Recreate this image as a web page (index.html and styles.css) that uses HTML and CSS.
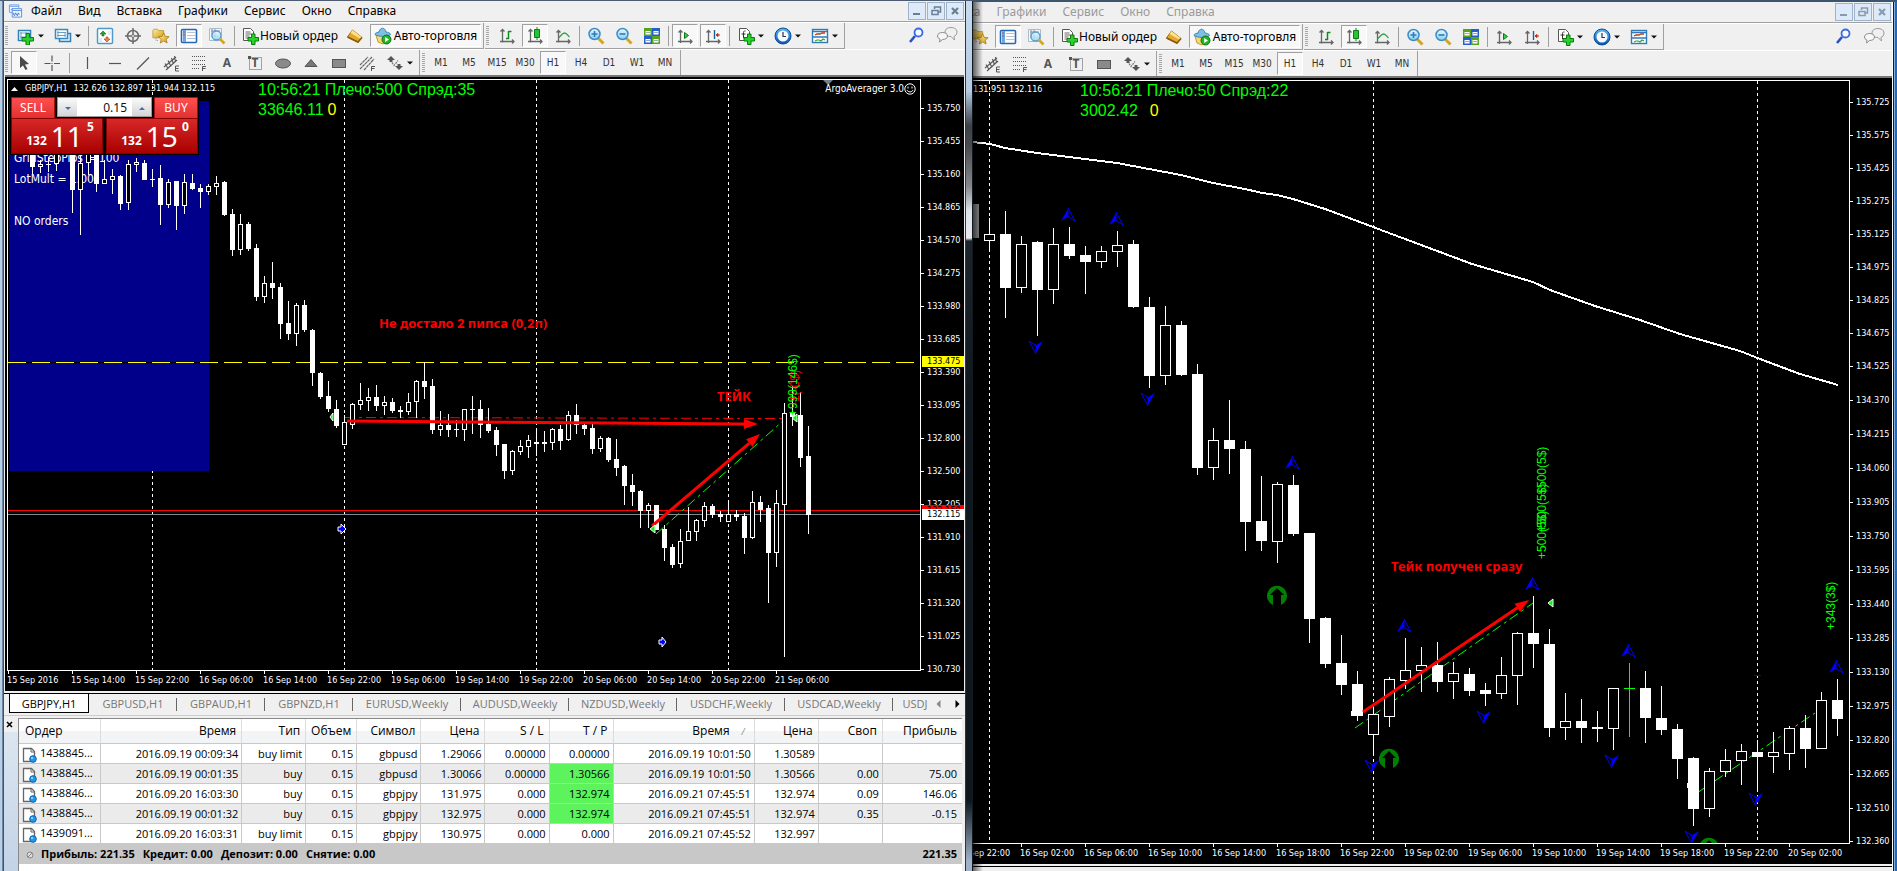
FILE: index.html
```html
<!DOCTYPE html>
<html lang="ru">
<head>
<meta charset="utf-8">
<title>GBPJPY,H1</title>
<link rel="stylesheet" href="styles.css">
</head>
<body>
<svg class="sprite" aria-hidden="true">
  <linearGradient id="g-gold" x1="0" y1="0" x2="1" y2="1"><stop offset="0" stop-color="#fff0a0"/><stop offset="1" stop-color="#d49a10"/></linearGradient>
  <linearGradient id="g-lens" x1="0" y1="0" x2="0" y2="1"><stop offset="0" stop-color="#e8f8ff"/><stop offset="1" stop-color="#86cdf2"/></linearGradient>
  <linearGradient id="g-blue" x1="0" y1="0" x2="0" y2="1"><stop offset="0" stop-color="#5cb8f0"/><stop offset="1" stop-color="#0a50b0"/></linearGradient>
  <symbol id="i-app" viewBox="0 0 16 16"><path d="M1.500 1.500h10v8h-10z" fill="#eef5ff" stroke="#6d9fe8"/><path d="M1.500 3h10" stroke="#6d9fe8"/><path d="M3 7l2-2 2 2 2-2" fill="none" stroke="#4f88dd"/><path d="M4.500 5.500h10v9h-10z" fill="#eef5ff" stroke="#5b8fe0"/><path d="M4.500 7.500h10" stroke="#5b8fe0"/><path d="M6 10v2l1 1 1-3 2 3 1-3 1 2" fill="none" stroke="#3d77d5"/></symbol>
  <symbol id="i-newchart" viewBox="0 0 18 18"><path d="M1.500 3.500h12v10h-12z" fill="#fff" stroke="#2f7fb8" stroke-width="1.500"/><path d="M4 5v7M3 10h9M3 6h9M9 5v3" stroke="#6aa0c4" fill="none"/><path d="M9 6.500h3.500v4h4v3.500h-4v4H9v-4H5v-3.500h4z" fill="#2bd12b" stroke="#0a7a12"/></symbol>
  <symbol id="i-profiles" viewBox="0 0 18 18"><path d="M5.500 6.500h11v8h-11z" fill="#dff0fb" stroke="#2f7fb8" stroke-width="1.500"/><path d="M1.500 2.500h12v9h-12z" fill="#fff" stroke="#3a88c0" stroke-width="1.500"/><path d="M4 4v6M3 5.500h9M3 8.500h9M11 6v4" stroke="#6aa0c4" fill="none"/></symbol>
  <symbol id="i-market" viewBox="0 0 18 18"><rect x="1.500" y="1.500" width="15" height="15" rx="1" fill="#fff" stroke="#4d9bc9" stroke-width="1.500"/><path d="M4 7l3-3 3 3H8v2H6V7z" fill="#28a428" stroke="#0a6d12" stroke-width=".6"/><path d="M8 12l3 3 3-3h-2v-2h-2v2z" fill="#f08040" stroke="#c03808" stroke-width=".6"/><path d="M3 12h3M3 14h3M12 5h3M12 7h3" stroke="#c6d8e4"/></symbol>
  <symbol id="i-target" viewBox="0 0 18 18"><g fill="none" stroke="#6a6a6a" stroke-width="1.500"><circle cx="9" cy="9" r="5.500"/><circle cx="9" cy="9" r="1.500" stroke-width="1"/><path d="M9 1v6M9 11v6M1 9h6M11 9h6"/></g></symbol>
  <symbol id="i-folder" viewBox="0 0 20 18"><path d="M1 3l1-1.500h4L7.500 3H13v8H1z" fill="url(#g-gold)" stroke="#b58a20" stroke-width=".8"/><path d="M4.500 11v3h3" fill="none" stroke="#888" stroke-dasharray="1 1"/><path d="M13 5.500l1.700 3.900 4.300.4-3.200 2.800 1 4.200-3.800-2.200-3.800 2.200 1-4.200L7 9.800l4.300-.4z" fill="url(#g-gold)" stroke="#a87a18" stroke-width=".9"/></symbol>
  <symbol id="i-nav" viewBox="0 0 18 18"><rect x="1.500" y="2.500" width="15" height="13" rx="1" fill="#fff" stroke="#2668b8" stroke-width="1.600"/><path d="M4.500 3v12" stroke="#6fa6dc" stroke-width="3"/><path d="M7 5.500h9M7 8.500h9M7 11.500h9" stroke="#b4c4d6"/><path d="M3.500 5h1M3.500 8h1" stroke="#d01010"/></symbol>
  <symbol id="i-tester" viewBox="0 0 18 18"><path d="M1.500 1.500h12v12h-12z" fill="#f4f8fb" stroke="#a6bccb"/><path d="M4 2v8M7 2v8M3 4h9" stroke="#88a"/><circle cx="8.500" cy="8.500" r="4.500" fill="url(#g-lens)" fill-opacity=".8" stroke="#5d9cc8" stroke-width="1.300"/><path d="M12 12l4.500 4.500" stroke="#d6a520" stroke-width="2.600"/></symbol>
  <symbol id="i-order" viewBox="0 0 18 18"><path d="M2.500 1.500h7l3 3v9h-10z" fill="#fff" stroke="#555"/><path d="M4.500 5h5M4.500 7h6M4.500 9h4M4.500 11h3" stroke="#666"/><path d="M10.500 7h3.500v3.500h3.500V14H14v3.500h-3.500V14H7v-3.500h3.500z" fill="#2bd12b" stroke="#0a7a12"/></symbol>
  <symbol id="i-gold" viewBox="0 0 18 18"><path d="M6.500 3L16 10.500l-4 5L1.500 10z" fill="#e3a92c" stroke="#9b6a10"/><path d="M6.500 3L16 10.500l-2 1L4.500 6z" fill="#ffe28a"/><path d="M1.500 10l10.500 5 4-4.500" fill="none" stroke="#8a5a0a" stroke-width="1.500"/></symbol>
  <symbol id="i-auto" viewBox="0 0 18 18"><path d="M2 8h13l-1 6-5 3-5-2z" fill="#f5d878" stroke="#c89a28"/><path d="M1 7.500c0-2 3-2 4-2.500 1-5 6-5 7 0 1.500.3 4.500.8 4.500 2.500-3 2.500-12 2.500-15.500 0z" fill="#7cc0e8" stroke="#3b87b5"/><circle cx="12.500" cy="12.500" r="4.500" fill="#22b422" stroke="#0b7514"/><path d="M11.200 10v5l3.800-2.500z" fill="#fff"/></symbol>
  <symbol id="i-bars" viewBox="0 0 18 18"><path d="M4.500 2v13.500M2 14.500h14M2.500 4.500l2-2 2 2M14 12.500l2 2-2 2" fill="none" stroke="#666" stroke-width="1.300"/><path d="M8 11.500h3M10.500 12V4M10.500 4.500h3" fill="none" stroke="#128a22" stroke-width="1.500"/></symbol>
  <symbol id="i-candle" viewBox="0 0 18 18"><path d="M4.500 2v13.500M2 14.500h14M2.500 4.500l2-2 2 2M14 12.500l2 2-2 2" fill="none" stroke="#666" stroke-width="1.300"/><path d="M11 0v13" stroke="#128a22"/><path d="M8.500 2.500h5v8h-5z" fill="#25c535" stroke="#0c7a18"/></symbol>
  <symbol id="i-line" viewBox="0 0 18 18"><path d="M4.500 3v12.500M2 14.500h14M2.500 5.500l2-2 2 2M14 12.500l2 2-2 2" fill="none" stroke="#666" stroke-width="1.300"/><path d="M4.500 11c3-3 4-5 6-5s3 2 5 4" fill="none" stroke="#35a045" stroke-width="1.300"/></symbol>
  <symbol id="i-zin" viewBox="0 0 18 18"><path d="M11 11l5.500 5.500" stroke="#d6a520" stroke-width="3"/><circle cx="7.500" cy="7" r="5.500" fill="url(#g-lens)" stroke="#3c8cc8" stroke-width="1.500"/><path d="M4.500 7h6M7.500 4v6" stroke="#2f7ab8" stroke-width="1.600"/></symbol>
  <symbol id="i-zout" viewBox="0 0 18 18"><path d="M11 11l5.500 5.500" stroke="#d6a520" stroke-width="3"/><circle cx="7.500" cy="7" r="5.500" fill="url(#g-lens)" stroke="#3c8cc8" stroke-width="1.500"/><path d="M4.500 7h6" stroke="#2f7ab8" stroke-width="1.600"/></symbol>
  <symbol id="i-tile" viewBox="0 0 18 18"><path d="M1 1h8v8H1zM9 9h8v8H9z" fill="#55a51c"/><path d="M9 1h8v8H9zM1 9h8v8H1z" fill="#2460cc"/><path d="M2.500 4h5v3.500h-5zM10.500 4h5v3.500h-5zM2.500 12h5v3.500h-5zM10.500 12h5v3.500h-5z" fill="#fff"/><path d="M3 5.500h4M11 5.500h4M3 13.500h4M11 13.500h4" stroke="#9ab"/></symbol>
  <symbol id="i-scroll" viewBox="0 0 18 18"><path d="M4.500 3v13M2 14.500h14M2.500 5.500l2-2 2 2M14 12.500l2 2-2 2" fill="none" stroke="#666" stroke-width="1.300"/><path d="M8.500 5.500v6l4-3z" fill="#35d045" stroke="#0c7a18"/></symbol>
  <symbol id="i-shift" viewBox="0 0 18 18"><path d="M4.500 3v13M2 14.500h14M2.500 5.500l2-2 2 2M14 12.500l2 2-2 2" fill="none" stroke="#666" stroke-width="1.300"/><path d="M10.500 3v9" stroke="#1560a0" stroke-width="1.400"/><path d="M16 8h-3M14 6.500v3L12 8z" fill="#c03010" stroke="#c03010"/></symbol>
  <symbol id="i-indic" viewBox="0 0 18 18"><path d="M2.500 1.500h7l3 3v9h-10z" fill="#fff" stroke="#555"/><path d="M8.500 4c-2-.5-2 1-2 3v4M4.500 7h4" fill="none" stroke="#333"/><path d="M10.500 7h3.500v3.500h3.500V14H14v3.500h-3.500V14H7v-3.500h3.500z" fill="#2bd12b" stroke="#0a7a12"/></symbol>
  <symbol id="i-clock" viewBox="0 0 18 18"><circle cx="9" cy="9" r="8" fill="url(#g-blue)" stroke="#0a4a98"/><circle cx="9" cy="9" r="5.500" fill="#f4faff"/><path d="M9 5v4.500h3" fill="none" stroke="#334" stroke-width="1.200"/></symbol>
  <symbol id="i-templ" viewBox="0 0 18 18"><rect x="1.500" y="2.500" width="15" height="13" fill="#fff" stroke="#2f7ab8" stroke-width="1.400"/><path d="M2 4.500h14M2 10h14" stroke="#2f7ab8" stroke-width="1.500"/><path d="M4 8l2-1h3l2-1 3 0" fill="none" stroke="#c03818" stroke-width="1.300"/><path d="M4 14l2-1h2l2 1 2-2 2 1" fill="none" stroke="#30a040" stroke-width="1.200"/></symbol>
  <symbol id="i-search" viewBox="0 0 18 18"><path d="M7 10l-5 6" stroke="#2c50c0" stroke-width="2.600"/><circle cx="10.500" cy="6.500" r="4" fill="#f4f8ff" stroke="#3a6ae0" stroke-width="1.800"/></symbol>
  <symbol id="i-chat" viewBox="0 0 22 18"><path d="M9 6c0-3 3-4.500 6-4.500s6 1.500 6 4.500-2 4-3 4.300L18.500 14 15 10.500C11 10.500 9 9 9 6z" fill="#f0f0f0" stroke="#999"/><path d="M1.500 10c0-2.500 2.500-3.500 5-3.500s5 1 5 3.500-2.500 3.500-5 3.500L3.500 16l.5-3c-1.500-.5-2.500-1.500-2.500-3z" fill="#f6f6f6" stroke="#8c8c8c"/></symbol>
  <symbol id="i-cursor" viewBox="0 0 18 18"><path d="M5 2v12l3-2.500 2.500 4.500 2-1L10 10.500l4-.5z" fill="#4a4a4a"/></symbol>
  <symbol id="i-cross" viewBox="0 0 18 18"><path d="M9 1.500v6M9 11v6M1.500 9.500h6M11 9.500h6" stroke="#555" stroke-width="1.200"/><path d="M8.500 9h1v1h-1z" fill="#555"/></symbol>
  <symbol id="i-vline" viewBox="0 0 18 18"><path d="M9.500 3v12" stroke="#555" stroke-width="1.200"/></symbol>
  <symbol id="i-hline" viewBox="0 0 18 18"><path d="M3 9.500h12" stroke="#555" stroke-width="1.200"/></symbol>
  <symbol id="i-trend" viewBox="0 0 18 18"><path d="M3 15.500L15 3.500" stroke="#555" stroke-width="1.200"/></symbol>
  <symbol id="i-equi" viewBox="0 0 18 18"><path d="M2 13L14 3M4 16L15 6M3 9.500l3 5M6 6.500l3 6M9.500 4l2 6M12.500 2l1 6" stroke="#555" stroke-width="1.100" fill="none"/><path d="M17 12h-3.500v5H17M13.500 14.500H16.500" stroke="#555" fill="none"/></symbol>
  <symbol id="i-fibo" viewBox="0 0 18 18"><path d="M2 2.500h14M2 6.500h14M2 10.500h14M2 14.500h8" stroke="#555" stroke-dasharray="1 1"/><path d="M12.500 17v-4.500H16M12.500 14.500H15.500" stroke="#555" fill="none"/></symbol>
  <symbol id="i-frame" viewBox="0 0 18 18"><path d="M3.500 3.500h12v12h-12z" fill="none" stroke="#555" stroke-dasharray="1 1"/><path d="M2 2h3v3H2z" fill="#555"/></symbol>
  <symbol id="i-ell" viewBox="0 0 18 18"><ellipse cx="9" cy="9.500" rx="7.500" ry="4.500" fill="#8a8a8a" stroke="#555"/></symbol>
  <symbol id="i-tri" viewBox="0 0 18 18"><path d="M9 5.500l6 7H3z" fill="#777" stroke="#555"/></symbol>
  <symbol id="i-rect" viewBox="0 0 18 18"><rect x="2.500" y="5.500" width="13" height="8" fill="#8a8a8a" stroke="#555"/></symbol>
  <symbol id="i-fan" viewBox="0 0 18 18"><path d="M2 11L10 3M2 15L14 3M6 16L16 5" stroke="#666" stroke-width="1.200" stroke-dasharray="3 .5"/><path d="M13.500 17v-4.500H17M13.500 14.500H16.500" stroke="#555" fill="none"/></symbol>
  <symbol id="i-arrows" viewBox="0 0 18 18"><path d="M5 2l4 4H6.500v2h-3V6H1zM13 16l-4-4h2.500v-2h3v2H17z" fill="#555"/><path d="M6 8.500l2 3 4-5" fill="none" stroke="#777" stroke-width="1.300" stroke-dasharray="2 1"/></symbol>
  <symbol id="i-doc" viewBox="0 0 15 16"><path d="M1.500 1.500h8l3 3v10h-11z" fill="#fff" stroke="#666" stroke-width="1.300"/><path d="M9 1.500V5h3.500" fill="none" stroke="#666"/><circle cx="11" cy="12" r="3.300" fill="#1f9be8" stroke="#0d62b0"/><circle cx="10" cy="11" r="1" fill="#a8e0ff"/></symbol>
  <symbol id="i-caret" viewBox="0 0 6 4"><path d="M0 .5h6L3 3.500z" fill="#111"/></symbol>
</svg>

<main class="desktop">
  <section class="terminal terminal-a">
    <div class="rim rim-left"></div>
    <div class="body">
      <nav class="menu">
        <svg class="app"><use href="#i-app"/></svg>
        <button>Файл</button><button>Вид</button><button>Вставка</button><button>Графики</button><button>Сервис</button><button>Окно</button><button>Справка</button>
        <span class="spacer"></span>
        <button class="box" aria-label="Свернуть"><svg viewBox="0 0 16 16"><path d="M4 11h7" stroke="#6a7f95" stroke-width="2"/></svg></button>
        <button class="box" aria-label="Восстановить"><svg viewBox="0 0 16 16"><path d="M6.500 6V4h6v5h-2M4 7.500h6v4H4z" fill="none" stroke="#6a7f95" stroke-width="1.500"/></svg></button>
        <button class="box" aria-label="Закрыть"><svg viewBox="0 0 16 16"><path d="M5 5l6 6M11 5l-6 6" stroke="#6a7f95" stroke-width="2.200"/></svg></button>
      </nav>
      <div class="bar">
        <div class="group">
          <i class="grip"></i>
          <button class="tb drop" aria-label="Новый график"><svg><use href="#i-newchart"/></svg><svg class="caret"><use href="#i-caret"/></svg></button>
          <button class="tb drop" aria-label="Профили"><svg><use href="#i-profiles"/></svg><svg class="caret"><use href="#i-caret"/></svg></button>
          <i class="sep"></i>
          <button class="tb" aria-label="Обзор рынка"><svg><use href="#i-market"/></svg></button>
          <button class="tb" aria-label="Окно данных"><svg><use href="#i-target"/></svg></button>
          <button class="tb" aria-label="Навигатор"><svg><use href="#i-folder"/></svg></button>
          <button class="tb on" aria-label="Терминал"><svg><use href="#i-nav"/></svg></button>
          <button class="tb" aria-label="Тестер"><svg><use href="#i-tester"/></svg></button>
          <i class="sep wide"></i>
          <button class="tb order"><svg><use href="#i-order"/></svg>Новый ордер</button>
          <button class="tb" aria-label="MetaEditor"><svg><use href="#i-gold"/></svg></button>
          <button class="tb on auto"><svg><use href="#i-auto"/></svg>Авто-торговля</button>
        </div>
        <div class="group">
          <i class="grip"></i>
          <button class="tb" aria-label="Бары"><svg><use href="#i-bars"/></svg></button>
          <button class="tb on" aria-label="Свечи"><svg><use href="#i-candle"/></svg></button>
          <button class="tb" aria-label="Линия"><svg><use href="#i-line"/></svg></button>
          <i class="sep"></i>
          <button class="tb" aria-label="Увеличить"><svg><use href="#i-zin"/></svg></button>
          <button class="tb" aria-label="Уменьшить"><svg><use href="#i-zout"/></svg></button>
          <button class="tb" aria-label="Упорядочить"><svg><use href="#i-tile"/></svg></button>
          <i class="sep"></i>
          <button class="tb on" aria-label="Автопрокрутка"><svg><use href="#i-scroll"/></svg></button>
          <button class="tb on" aria-label="Сдвиг графика"><svg><use href="#i-shift"/></svg></button>
          <i class="sep"></i>
          <button class="tb drop" aria-label="Индикаторы"><svg><use href="#i-indic"/></svg><svg class="caret"><use href="#i-caret"/></svg></button>
          <button class="tb drop" aria-label="Периоды"><svg><use href="#i-clock"/></svg><svg class="caret"><use href="#i-caret"/></svg></button>
          <button class="tb drop" aria-label="Шаблоны"><svg><use href="#i-templ"/></svg><svg class="caret"><use href="#i-caret"/></svg></button>
        </div>
        <span class="spacer"></span>
        <button class="tb" aria-label="Поиск"><svg><use href="#i-search"/></svg></button>
        <button class="tb chat" aria-label="Чат"><svg><use href="#i-chat"/></svg></button>
      </div>
      <div class="bar low">
        <div class="group">
          <i class="grip"></i>
          <button class="tb on" aria-label="Курсор"><svg><use href="#i-cursor"/></svg></button>
          <button class="tb" aria-label="Перекрестие"><svg><use href="#i-cross"/></svg></button>
          <i class="sep wide"></i>
          <button class="tb" aria-label="Вертикальная линия"><svg><use href="#i-vline"/></svg></button>
          <button class="tb" aria-label="Горизонтальная линия"><svg><use href="#i-hline"/></svg></button>
          <button class="tb" aria-label="Трендовая линия"><svg><use href="#i-trend"/></svg></button>
          <button class="tb" aria-label="Канал"><svg><use href="#i-equi"/></svg></button>
          <button class="tb" aria-label="Фибоначчи"><svg><use href="#i-fibo"/></svg></button>
          <button class="tb letter">A</button>
          <button class="tb letter framed"><svg><use href="#i-frame"/></svg><span>T</span></button>
          <button class="tb" aria-label="Эллипс"><svg><use href="#i-ell"/></svg></button>
          <button class="tb" aria-label="Треугольник"><svg><use href="#i-tri"/></svg></button>
          <button class="tb" aria-label="Прямоугольник"><svg><use href="#i-rect"/></svg></button>
          <button class="tb" aria-label="Веер"><svg><use href="#i-fan"/></svg></button>
          <button class="tb drop" aria-label="Стрелки"><svg><use href="#i-arrows"/></svg><svg class="caret"><use href="#i-caret"/></svg></button>
        </div>
        <div class="group frames">
          <i class="grip"></i>
          <button class="tb">M1</button><button class="tb">M5</button><button class="tb">M15</button><button class="tb">M30</button><button class="tb on">H1</button><button class="tb">H4</button><button class="tb">D1</button><button class="tb">W1</button><button class="tb">MN</button>
        </div>
      </div>

      <div class="chart">
        <div class="plot">
          <svg id="plot-a" class="canvas"></svg>
          <div class="caption"><svg viewBox="0 0 8 5"><path d="M0 5h7L3.500 1z" fill="#fff"/></svg><span>GBPJPY,H1</span><span>132.626 132.897 131.944 132.115</span></div>
          <div class="expert">ArgoAverager 3.0<svg viewBox="0 0 12 12"><circle cx="6" cy="6" r="5.200" fill="none" stroke="#fff"/><path d="M4 3.500v2M8 3.500v2" stroke="#fff"/><path d="M3 7c1 2.500 5 2.500 6 0" fill="none" stroke="#fff"/></svg></div>
          <div class="info"><p>10:56:21 Плечо:500 Спрэд:35</p><p>33646.11<b>0</b></p></div>
          <form class="trade">
            <button type="button" class="side sell">SELL</button>
            <div class="lots"><button type="button" aria-label="Меньше"><svg viewBox="0 0 6 4"><path d="M0 0h6L3 3z" fill="#4a6ab0"/></svg></button><input aria-label="Лот" value="0.15"><button type="button" aria-label="Больше"><svg viewBox="0 0 6 4"><path d="M0 3h6L3 0z" fill="#4a6ab0"/></svg></button></div>
            <button type="button" class="side buy">BUY</button>
            <div class="quote"><small>132</small><b>11</b><sup>5</sup></div>
            <div class="quote"><small>132</small><b>15</b><sup>0</sup></div>
          </form>
        </div>
        <div class="prices">
          <span>135.750</span><span>135.455</span><span>135.160</span><span>134.865</span><span>134.570</span><span>134.275</span><span>133.980</span><span>133.685</span><span>133.390</span><span>133.095</span><span>132.800</span><span>132.500</span><span>132.205</span><span>131.910</span><span>131.615</span><span>131.320</span><span>131.025</span><span>130.730</span>
          <mark class="level">133.475</mark><mark class="ask">132.150</mark><mark class="bid">132.115</mark>
        </div>
        <div class="times">
          <span>15 Sep 2016</span><span>15 Sep 14:00</span><span>15 Sep 22:00</span><span>16 Sep 06:00</span><span>16 Sep 14:00</span><span>16 Sep 22:00</span><span>19 Sep 06:00</span><span>19 Sep 14:00</span><span>19 Sep 22:00</span><span>20 Sep 06:00</span><span>20 Sep 14:00</span><span>20 Sep 22:00</span><span>21 Sep 06:00</span>
        </div>
      </div>

      <div class="tabs">
        <button class="tab active">GBPJPY,H1</button><button class="tab">GBPUSD,H1</button><button class="tab">GBPAUD,H1</button><button class="tab">GBPNZD,H1</button><button class="tab week">EURUSD,Weekly</button><button class="tab week">AUDUSD,Weekly</button><button class="tab week">NZDUSD,Weekly</button><button class="tab week">USDCHF,Weekly</button><button class="tab week">USDCAD,Weekly</button><button class="tab cut">USDJ</button>
        <button class="arrow" aria-label="Назад"><svg viewBox="0 0 5 8"><path d="M4.500 0v8L.5 4z" fill="#888"/></svg></button>
        <button class="arrow" aria-label="Вперёд"><svg viewBox="0 0 5 8"><path d="M.5 0v8l4-4z" fill="#000"/></svg></button>
      </div>

      <div class="history">
        <div class="handle"><button aria-label="Закрыть"><svg viewBox="0 0 8 8"><path d="M1 1l5 5M6 1L1 6" stroke="#000" stroke-width="1.600"/></svg></button></div>
        <div class="sheet">
        <table>
          <colgroup><col class="c-order"><col class="c-time"><col><col class="c-vol"><col><col><col><col><col class="c-time"><col><col><col class="c-profit"></colgroup>
          <thead><tr><th>Ордер</th><th>Время</th><th>Тип</th><th>Объем</th><th>Символ</th><th>Цена</th><th>S / L</th><th>T / P</th><th>Время<i class="sort">/</i></th><th>Цена</th><th>Своп</th><th>Прибыль</th></tr></thead>
          <tbody>
            <tr><td><svg><use href="#i-doc"/></svg>1438845...</td><td>2016.09.19 00:09:34</td><td>buy limit</td><td>0.15</td><td>gbpusd</td><td>1.29066</td><td>0.00000</td><td>0.00000</td><td>2016.09.19 10:01:50</td><td>1.30589</td><td></td><td></td></tr>
            <tr><td><svg><use href="#i-doc"/></svg>1438845...</td><td>2016.09.19 00:01:35</td><td>buy</td><td>0.15</td><td>gbpusd</td><td>1.30066</td><td>0.00000</td><td class="hit">1.30566</td><td>2016.09.19 10:01:50</td><td>1.30566</td><td>0.00</td><td>75.00</td></tr>
            <tr><td><svg><use href="#i-doc"/></svg>1438846...</td><td>2016.09.20 16:03:30</td><td>buy</td><td>0.15</td><td>gbpjpy</td><td>131.975</td><td>0.000</td><td class="hit">132.974</td><td>2016.09.21 07:45:51</td><td>132.974</td><td>0.09</td><td>146.06</td></tr>
            <tr><td><svg><use href="#i-doc"/></svg>1438845...</td><td>2016.09.19 00:01:32</td><td>buy</td><td>0.15</td><td>gbpjpy</td><td>132.975</td><td>0.000</td><td class="hit">132.974</td><td>2016.09.21 07:45:51</td><td>132.974</td><td>0.35</td><td>-0.15</td></tr>
            <tr><td><svg><use href="#i-doc"/></svg>1439091...</td><td>2016.09.20 16:03:31</td><td>buy limit</td><td>0.15</td><td>gbpjpy</td><td>130.975</td><td>0.000</td><td>0.000</td><td>2016.09.21 07:45:52</td><td>132.997</td><td></td><td></td></tr>
          </tbody>
          <tfoot><tr><td colspan="9"><svg viewBox="0 0 8 8"><circle cx="4" cy="4" r="3" fill="#ddd" stroke="#888"/><path d="M2 6l4-4" stroke="#888"/></svg><span>Прибыль: 221.35</span><span>Кредит: 0.00</span><span>Депозит: 0.00</span><span>Снятие: 0.00</span></td><td colspan="3">221.35</td></tr></tfoot>
        </table>
        </div>
      </div>
    </div>
    <div class="rim rim-right"></div>
  </section>

  <section class="terminal terminal-b">
    <div class="body">
      <nav class="menu">
        <button>Вставка</button><button>Графики</button><button>Сервис</button><button>Окно</button><button>Справка</button>
        <span class="spacer"></span>
        <button class="box" aria-label="Свернуть"><svg viewBox="0 0 16 16"><path d="M4 11h7" stroke="#8a9bae" stroke-width="2"/></svg></button>
        <button class="box" aria-label="Восстановить"><svg viewBox="0 0 16 16"><path d="M6.500 6V4h6v5h-2M4 7.500h6v4H4z" fill="none" stroke="#8a9bae" stroke-width="1.500"/></svg></button>
        <button class="box" aria-label="Закрыть"><svg viewBox="0 0 16 16"><path d="M5 5l6 6M11 5l-6 6" stroke="#8a9bae" stroke-width="2.200"/></svg></button>
      </nav>
      <div class="bar">
        <div class="group first">
          <button class="tb" aria-label="Навигатор"><svg><use href="#i-folder"/></svg></button>
          <button class="tb on" aria-label="Терминал"><svg><use href="#i-nav"/></svg></button>
          <button class="tb" aria-label="Тестер"><svg><use href="#i-tester"/></svg></button>
          <i class="sep wide"></i>
          <button class="tb order"><svg><use href="#i-order"/></svg>Новый ордер</button>
          <button class="tb" aria-label="MetaEditor"><svg><use href="#i-gold"/></svg></button>
          <button class="tb on auto"><svg><use href="#i-auto"/></svg>Авто-торговля</button>
        </div>
        <div class="group">
          <i class="grip"></i>
          <button class="tb" aria-label="Бары"><svg><use href="#i-bars"/></svg></button>
          <button class="tb on" aria-label="Свечи"><svg><use href="#i-candle"/></svg></button>
          <button class="tb" aria-label="Линия"><svg><use href="#i-line"/></svg></button>
          <i class="sep"></i>
          <button class="tb" aria-label="Увеличить"><svg><use href="#i-zin"/></svg></button>
          <button class="tb" aria-label="Уменьшить"><svg><use href="#i-zout"/></svg></button>
          <button class="tb" aria-label="Упорядочить"><svg><use href="#i-tile"/></svg></button>
          <i class="sep"></i>
          <button class="tb" aria-label="Автопрокрутка"><svg><use href="#i-scroll"/></svg></button>
          <button class="tb" aria-label="Сдвиг графика"><svg><use href="#i-shift"/></svg></button>
          <i class="sep"></i>
          <button class="tb drop" aria-label="Индикаторы"><svg><use href="#i-indic"/></svg><svg class="caret"><use href="#i-caret"/></svg></button>
          <button class="tb drop" aria-label="Периоды"><svg><use href="#i-clock"/></svg><svg class="caret"><use href="#i-caret"/></svg></button>
          <button class="tb drop" aria-label="Шаблоны"><svg><use href="#i-templ"/></svg><svg class="caret"><use href="#i-caret"/></svg></button>
        </div>
        <span class="spacer"></span>
        <button class="tb" aria-label="Поиск"><svg><use href="#i-search"/></svg></button>
        <button class="tb chat" aria-label="Чат"><svg><use href="#i-chat"/></svg></button>
      </div>
      <div class="bar low">
        <div class="group first-low">
          <button class="tb" aria-label="Канал"><svg><use href="#i-equi"/></svg></button>
          <button class="tb" aria-label="Фибоначчи"><svg><use href="#i-fibo"/></svg></button>
          <button class="tb letter">A</button>
          <button class="tb letter framed"><svg><use href="#i-frame"/></svg><span>T</span></button>
          <button class="tb" aria-label="Прямоугольник"><svg><use href="#i-rect"/></svg></button>
          <button class="tb drop" aria-label="Стрелки"><svg><use href="#i-arrows"/></svg><svg class="caret"><use href="#i-caret"/></svg></button>
        </div>
        <div class="group frames">
          <i class="grip"></i>
          <button class="tb">M1</button><button class="tb">M5</button><button class="tb">M15</button><button class="tb">M30</button><button class="tb on">H1</button><button class="tb">H4</button><button class="tb">D1</button><button class="tb">W1</button><button class="tb">MN</button>
        </div>
      </div>
      <div class="chart">
        <div class="plot">
          <svg id="plot-b" class="canvas"></svg>
          <div class="caption"><span>131.951 132.116</span></div>
          <div class="info"><p>10:56:21 Плечо:50 Спрэд:22</p><p>3002.42<b>0</b></p></div>
        </div>
        <div class="prices">
          <span>135.725</span><span>135.575</span><span>135.425</span><span>135.275</span><span>135.125</span><span>134.975</span><span>134.825</span><span>134.675</span><span>134.525</span><span class="tall">134.370</span><span class="tall">134.215</span><span class="tall">134.060</span><span class="tall">133.905</span><span class="tall">133.750</span><span class="tall">133.595</span><span class="tall">133.440</span><span class="tall">133.285</span><span class="tall">133.130</span><span class="tall">132.975</span><span class="tall">132.820</span><span class="tall">132.665</span><span class="tall">132.510</span><span>132.360</span>
        </div>
        <div class="times">
          <span>15 Sep 22:00</span><span>16 Sep 02:00</span><span>16 Sep 06:00</span><span>16 Sep 10:00</span><span>16 Sep 14:00</span><span>16 Sep 18:00</span><span>16 Sep 22:00</span><span>19 Sep 02:00</span><span>19 Sep 06:00</span><span>19 Sep 10:00</span><span>19 Sep 14:00</span><span>19 Sep 18:00</span><span>19 Sep 22:00</span><span>20 Sep 02:00</span>
        </div>
      </div>
      <div class="under"></div>
      <div class="shade"></div>
    </div>
    <div class="rim rim-end"></div>
  </section>
</main>
<script src="app.js"></script>
</body>
</html>
```
FILE: styles.css
```css
* { box-sizing: border-box; }
body {
  margin: 0;
  background: #000;
  font-family: "Noto Sans", "Open Sans", sans-serif;
  font-size: 12px;
  overflow: hidden;
}
button, input { font: inherit; color: inherit; border: 0; padding: 0; margin: 0; background: none; }
p { margin: 0; }
.sprite { position: absolute; width: 0; height: 0; }
.spacer { flex: 1; }

.desktop { display: flex; height: 100vh; }
.terminal { display: flex; min-width: 0; }
.terminal-a { flex: 973 1 0; border-top: 1px solid #4c5a72; }
.terminal-b { flex: 924 1 0; border-top: 2px solid #3c566f; }
.body { flex: 1; min-width: 0; display: flex; flex-direction: column; background: #f0f0f0; position: relative; overflow: hidden; }
.rim { flex: none; }
.rim-left { width: 4px; background: linear-gradient(90deg, #b9cfe4 0 2px, #6b87a5 2px 3px, #505050 3px); }
.rim-right {
  width: 8px;
  border-left: 1px solid #2a3442;
  border-right: 1px solid #101820;
  background: linear-gradient(#c5dbf0 0, #b4cbe2 90px, #3c4147 125px, #4b4b4e 145px, #85868c 185px, #dfe3ea 210px, #e8e8ee 237px, #1c242c 240px, #10181f 400px, #10181f 800px, #9fb2c8 860px);
}
.rim-end { width: 5px; border-left: 1px solid #fff; background: linear-gradient(90deg, #101c30 0 1px, #7fb0e0 1px 2px, #2a66b0 2px); }

/* menu */
.menu { display: flex; align-items: center; height: 21px; flex: none; border-bottom: 1px solid #a0a0a0; padding: 0 1px 0 4px; white-space: nowrap; }
.menu .app { width: 15px; height: 16px; flex: none; }
.menu > button { padding: 0 8px; line-height: 18px; flex: none; }
.menu > .box { width: 18px; height: 18px; padding: 0; margin-left: 1px; border: 1px solid #9fb2c8; background: #dceafa; }
.box svg { display: block; width: 16px; height: 16px; }

/* toolbars */
.bar { display: flex; align-items: stretch; height: 27px; flex: none; border-top: 1px solid #fff; }
.low { height: 26px; }
.group { display: flex; align-items: center; flex: none; padding-right: 1px; border-right: 1px solid #a0a0a0; border-bottom: 1px solid #a0a0a0; margin-right: 1px; }
.low .group { border-bottom: 0; }
.grip { width: 3px; height: 20px; margin: 0 4px 0 1px; background: repeating-linear-gradient(#a8a8a8 0 1px, #f0f0f0 1px 2px); }
.low .grip { margin-right: 2px; }
.sep { width: 1px; height: 20px; margin: 0 2px; background: #a0a0a0; }
.wide { margin: 0 3px; }
.tb { display: flex; align-items: center; justify-content: center; width: 28px; height: 23px; flex: none; white-space: nowrap; }
.tb svg { width: 18px; height: 18px; flex: none; }
.tb.drop { width: 37px; }
.tb .caret { width: 6px; height: 4px; margin-left: 3px; }
.tb.on { width: 26px; margin: 0 1px; border: 1px solid #a0a0a0; border-right-color: #fff; border-bottom-color: #fff; background: #f8f8f8; }
.tb.order { width: auto; gap: 1px; padding: 0 3px; }
.tb.on.auto { width: 111px; gap: 2px; }
.tb.chat svg { width: 22px; }
.tb.chat { width: 32px; margin-right: 2px; }
.letter { color: #555; font-weight: bold; position: relative; }
.framed span { position: absolute; inset: 0; line-height: 24px; text-align: center; }
.frames { font-family: "DejaVu Sans Condensed", "DejaVu Sans", sans-serif; font-size: 10px; color: #333; }

/* chart */
.chart {
  flex: 1; min-height: 0;
  display: grid; grid-template: minmax(0, 1fr) 20px / minmax(0, 1fr) 43px;
  background: #000; color: #fff;
  border-top: 2px solid #777;
  padding: 2px 0 0 2px;
  margin: 0 1px 0 1px;
  font-family: "DejaVu Sans Condensed", "DejaVu Sans", sans-serif; font-size: 9px;
}
.plot { position: relative; border: 1px solid #fff; overflow: hidden; }
.canvas { position: absolute; inset: 0; width: 100%; height: 100%; display: block; }
.caption { position: absolute; left: 3px; top: 2px; display: flex; align-items: center; gap: 6px; line-height: 12px; }
.caption svg { width: 8px; height: 5px; }
.expert { position: absolute; right: 4px; top: 2px; display: flex; align-items: center; line-height: 13px; font-size: 10px; }
.expert svg { width: 12px; height: 12px; }
.info { position: absolute; left: 250px; top: 0; font: 16px/20px "Liberation Sans", sans-serif; color: #0f0; }
.info b { font-weight: normal; color: #ff0; margin-left: 4px; }
.prices { position: relative; padding-top: 13px; }
.prices span { display: flex; align-items: center; height: 33px; line-height: 33px; }
.prices .tall { height: 34px; }
.prices span::before { content: ""; width: 3px; height: 1px; background: #fff; margin-right: 3px; }
.prices mark { position: absolute; left: 1px; right: 0; padding-left: 5px; line-height: 11px; color: #000; }
.prices .level { top: 277px; background: #ff0; }
.prices .ask { top: 426px; background: #f00; }
.prices .bid { top: 430px; background: #fff; }
.times { display: flex; overflow: hidden; grid-column: 1 / 3; }
.times span { width: 64px; flex: none; line-height: 19px; white-space: nowrap; position: relative; }
.times span::before { content: ""; position: absolute; left: 1px; top: 0; width: 1px; height: 3px; background: #fff; }

/* one-click trading */
.trade {
  position: absolute; left: 2px; top: 16px; width: 189px;
  display: grid; grid-template: 21px 36px / 44px 47px 1px 47px 44px; column-gap: 1px;
  padding: 1px; background: #000; color: #fff;
}
.trade, .trade button { font-family: "Noto Sans", sans-serif; }
.side { background: linear-gradient(#ff5050, #e03030); border: 1px solid #a81010; border-bottom: 0; font-size: 12px; line-height: 20px; }
.sell { grid-column: 1; }
.buy { grid-column: 5; }
.lots { grid-column: 2 / 5; display: flex; height: 20px; background: #fff; margin: 0 1px; border: 1px solid #999; }
.lots button { width: 19px; flex: none; background: linear-gradient(#fafafa, #d4d4d8); }
.lots svg { width: 6px; height: 4px; }
.lots input { flex: 1; min-width: 0; color: #111; text-align: right; padding-right: 5px; font-size: 12px; }
.quote { grid-column: 1 / 3; display: flex; justify-content: center; background: linear-gradient(#d82828, #a80000); border: 1px solid #8a0000; line-height: 34px; gap: 4px; padding-left: 6px; }
.quote + .quote { grid-column: 4 / 6; }
.quote small { font-size: 12px; font-weight: bold; line-height: 44px; }
.quote b { font-size: 28px; font-weight: normal; }
.quote sup { font-size: 12px; font-weight: bold; line-height: 16px; }

/* tabs */
.tabs { display: flex; flex: none; height: 22px; margin-top: 2px; border-top: 1px solid #000; font-family: "Open Sans", "Noto Sans", sans-serif; font-size: 11px; color: #777; padding-left: 5px; }
.tab { position: relative; width: 88px; flex: none; height: 19px; line-height: 19px; }
.week { width: 108px; }
.tab::after { content: ""; position: absolute; right: 0; top: 4px; width: 1px; height: 13px; background: #666; }
.tab.active { width: 80px; color: #000; background: #fff; border: 1px solid #000; border-top: 0; }
.tab.active::after, .cut::after { display: none; }
.tab.cut { width: 36px; padding-left: 8px; }
.arrow { width: 19px; height: 19px; flex: none; }
.arrow svg { width: 5px; height: 8px; }

/* account history */
.history { display: flex; flex: none; height: 156px; border-top: 1px solid #ccc; }
.handle { width: 14px; background: linear-gradient(#f0f0f0 0 16px, #dce6f1 16px, #c3d3e6); }
.handle button { display: block; width: 12px; height: 14px; }
.handle svg { width: 8px; height: 8px; }
.sheet { flex: 1; margin-top: 2px; margin-right: 3px; background: #fff; border-top: 1px solid #888; border-left: 1px solid #888; }
table { width: 100%; table-layout: fixed; border-collapse: separate; border-spacing: 0; font-family: "Open Sans", "Noto Sans", sans-serif; font-size: 11px; color: #000; }
col { width: 64px; }
.c-order { width: 82px; }
.c-time { width: 141px; }
.c-vol { width: 51px; }
.c-profit { width: 79px; }
th, td { height: 20px; padding: 0 3px; text-align: right; font-weight: normal; line-height: 18px; white-space: nowrap; border-right: 1px solid #c8c8c8; border-bottom: 1px solid #c8c8c8; }
th { height: 25px; border-right-color: #dcdcdc; background: linear-gradient(#fff 50%, #f3f4f6 50%); font-size: 12px; padding-right: 5px; }
th:first-child { text-align: left; padding-left: 6px; }
td:first-child { text-align: left; }
td:first-child svg { width: 15px; height: 16px; vertical-align: middle; margin-right: 3px; }
tbody tr:nth-child(even) { background: #ebebeb; }
td:last-child, th:last-child { border-right: 0; padding-right: 5px; }
.hit { background: #5df35d; }
.sort { color: #888; font-size: 9px; margin: 0 4px 0 12px; }
tfoot td { background: #c8c8c8; font-weight: bold; border: 0; }
tfoot td:first-child svg { width: 8px; height: 8px; margin: 0 7px 0 4px; }
tfoot span { margin-right: 8px; }

/* second terminal, partly covered by the first */
.terminal-b .menu { color: #9a9a9a; padding-left: 0; }
.terminal-b .menu > button:first-child { margin-left: -46px; }
.terminal-b .first { margin-left: -7px; }
.terminal-b .first-low { margin-left: 5px; }
.terminal-b .chart { padding-left: 0; margin: 0; grid-template-columns: minmax(0, 1fr) 42px; }
.terminal-b .plot { border-left: 0; }
.terminal-b .caption { left: 0; }
.terminal-b .info { left: 107px; }
.terminal-b .info b { margin-left: 12px; }
.terminal-b .prices { padding-top: 6px; }
.terminal-b .times span:first-child { margin-left: -17px; }
.under { height: 7px; flex: none; background: linear-gradient(#f0f0f0 0 2px, #000 2px 3px, #f0f0f0 3px); }
.shade { position: absolute; left: 0; top: 0; width: 10px; height: 100%; background: linear-gradient(90deg, rgba(0, 0, 0, .6), transparent); }
```
FILE: app.js
```js
const NS = 'http://www.w3.org/2000/svg';

function add(parent, tag, attrs, text) {
  const el = document.createElementNS(NS, tag);
  for (const k in attrs) el.setAttribute(k, attrs[k]);
  if (text) el.textContent = text;
  parent.appendChild(el);
  return el;
}
function rect(g, x, y, w, h, fill) {
  return add(g, 'rect', { x, y, width: w, height: h, fill, 'shape-rendering': 'crispEdges' });
}
function path(g, d, attrs) { return add(g, 'path', Object.assign({ d, fill: 'none' }, attrs)); }

/* candle: high, low, top, bottom, 1 = falling (solid) / 0 = rising (hollow) */
function candles(g, list, x0, step, half) {
  list.forEach((c, i) => {
    if (!c) return;
    const x = x0 + i * step, [hi, lo, top, bot, solid, color = '#fff'] = c;
    rect(g, x, hi, 1, Math.max(lo - hi, 1), color);
    rect(g, x - half, top, half * 2 + 1, Math.max(bot - top, 1), color);
    if (!solid && bot - top > 2) rect(g, x - half + 1, top + 1, half * 2 - 1, bot - top - 2, '#000');
  });
}
function dayLine(g, x, y1, y2) {
  path(g, `M${x + .5} ${y1}V${y2}`, { stroke: '#fff', 'stroke-dasharray': '3 3' });
}
function bigArrow(g, x1, y1, x2, y2) {
  const a = Math.atan2(y2 - y1, x2 - x1), c = Math.cos(a), s = Math.sin(a);
  const bx = x2 - 14 * c, by = y2 - 14 * s;
  path(g, `M${x1} ${y1}L${bx} ${by}`, { stroke: '#f00', 'stroke-width': 3 });
  path(g, `M${x2} ${y2}L${bx - 5 * s} ${by + 5 * c}L${bx + 5 * s} ${by - 5 * c}Z`, { fill: '#f00' });
}
function dashDot(g, x1, y1, x2, y2, color) {
  path(g, `M${x1} ${y1}L${x2} ${y2}`, { stroke: color, 'stroke-dasharray': '10 4 3 4' });
}
function upright(g, x, y, text, color) {
  add(g, 'text', { transform: `translate(${x} ${y}) rotate(-90)`, fill: color, 'font-family': 'Liberation Sans, sans-serif', 'font-size': 12 }, text);
}
function note(g, x, y, text) {
  add(g, 'text', { x, y, fill: '#f00', 'font-family': 'Noto Sans, sans-serif', 'font-size': 13, 'font-weight': 'bold' }, text);
}
function comment(g, x, y, text) {
  add(g, 'text', { x, y, fill: '#fff', 'font-family': 'DejaVu Sans Condensed, sans-serif', 'font-size': 12 }, text);
}
function fractal(g, x, y, dir) {
  const t = `translate(${x} ${y}) scale(${dir})`;
  path(g, 'M.5 0L-7 13L.5 8.500Z', { fill: '#00f', transform: t });
  path(g, 'M0 0L7 13L0 8.500', { stroke: '#00f', 'stroke-width': 1, transform: t });
}
function signal(g, x, y) {
  path(g, `M${x - 4} ${y + 9}A10 10 0 1 1 ${x + 4} ${y + 9}V${y - 1}H${x + 7}L${x} ${y - 8}L${x - 7} ${y - 1}H${x - 4}Z`, { fill: '#008000' });
}

const A = [
  [150,174,150,167,1],[160,173,164,167,0],[157,172,164,165,1],[150,171,150,164,0],null,
  [150,213,150,190,1],[150,235,163,190,0],[150,175,150,163,0],[150,192,150,184,1],[160,184,179,184,0],
  [169,194,176,180,0],[175,210,176,204,1],[160,210,164,203,0],[158,172,162,165,0],[160,180,163,180,1],
  [169,187,179,180,1],[165,225,178,205,1],[179,208,182,205,0],[181,230,181,206,1],[174,214,182,206,0],
  [174,190,183,189,1],[184,208,188,192,1],[184,195,186,192,0],[176,195,183,187,0],[181,216,182,215,1],
  [209,256,214,250,1],[214,255,224,250,0],[222,251,224,249,1],[244,301,248,297,1],[276,303,283,297,0],
  [262,299,283,288,1],[283,339,287,324,1],[301,340,323,334,1],[303,346,305,334,0],[300,332,305,330,1],
  [329,386,330,373,1],[372,399,373,397,1],[381,412,396,409,1],[400,428,409,426,1],[415,445,422,445,0],
  [403,429,404,425,0],[383,410,400,405,0],[388,411,397,401,0],[385,411,397,406,1],[396,415,402,406,0],
  [398,413,402,411,1],[406,418,410,412,1],[393,415,402,412,0],[380,418,381,402,0],[362,399,381,387,1],
  [379,434,386,430,1],[411,436,425,430,0],[414,437,425,430,1],[420,437,429,430,1],[409,441,409,430,0],
  [396,434,409,410,1],[400,438,409,425,1],[408,433,424,431,1],[427,456,430,445,1],[444,479,444,471,1],
  [450,475,451,471,0],[440,455,446,452,0],[435,458,440,447,0],[430,456,442,444,1],[431,452,442,444,1],
  [428,450,429,443,0],[425,450,429,441,1],[411,441,415,440,0],[404,434,415,425,1],[424,435,425,429,1],
  [424,454,428,449,1],[436,452,438,449,0],[437,462,438,460,1],[439,476,459,468,1],[465,505,466,486,1],
  [474,506,485,492,1],[490,528,491,511,1],[503,528,505,511,0],[505,530,505,530,1],[525,561,529,548,1],
  [544,568,547,565,1],[529,568,541,564,0],[507,541,531,541,0],[519,541,520,532,0],[502,527,506,521,0],
  [504,518,506,515,1],[511,522,514,517,1],[500,522,514,522,0],[510,521,514,517,1],[513,554,516,538,1],
  [491,539,502,538,0],[496,522,502,510,1],[505,603,508,553,1],[490,567,503,553,0],[403,657,413,505,0],
  [386,426,413,417,1],[392,467,415,458,1],[426,534,456,515,1]
];

const B = [
  [204,238,204,238,1,'#999'],
  [218,250,234,241,0],[211,318,234,288,1],[236,293,244,288,0],[241,336,242,290,1],[228,304,244,290,0],
  [227,259,244,256,1],[246,294,255,262,1],[246,268,251,262,0],[231,267,245,252,0],[240,308,244,307,1],
  [297,388,307,376,1],[306,385,325,376,0],[321,376,325,375,1],[364,475,374,468,1],[428,480,440,468,0],
  [400,474,440,449,1],[441,551,449,522,1],[476,551,521,541,1],[482,563,484,542,0],[475,536,485,534,1],
  [533,643,533,619,1],[617,668,618,664,1],[635,695,663,685,1],[671,721,684,716,1],[705,755,714,735,0],
  [677,727,679,717,0],[638,689,670,681,0],[647,692,665,671,0],[642,692,665,682,1],[662,699,673,682,0],
  [668,696,674,691,1],[683,706,690,694,1],[657,699,675,694,0],[632,705,633,676,0],[596,668,633,644,1],
  [629,737,644,728,1],[693,740,721,728,0],[699,743,721,728,1],[711,742,727,729,1],[688,750,688,729,0],
  [663,737,688,689,1,'#0f0'],[671,743,688,718,1],[686,735,718,730,1],[724,779,729,759,1],[757,826,758,809,1],
  [768,817,771,809,0],[749,777,760,772,0],[744,785,751,761,0],[740,791,752,757,1],[732,773,752,757,0],
  [726,770,728,754,0],[715,768,728,749,1],[692,749,700,749,0],[679,736,700,719,1]
];

const a = add(document.getElementById('plot-a'), 'g', { transform: 'translate(-8 -80)' });
[152, 344, 536, 728].forEach(x => dayLine(a, x, 80, 671));
rect(a, 9, 101, 200, 370, '#00008b');
path(a, 'M8 362.500H209', { stroke: '#000' });
path(a, 'M8 362.500H920', { stroke: '#ff0', 'stroke-dasharray': '18 6' });
rect(a, 8, 510, 912, 1, '#f00');
rect(a, 8, 514, 912, 1, '#808a94');
comment(a, 14, 162, 'GridStepPips = 100');
comment(a, 14, 183, 'LotMult = 1.00');
comment(a, 14, 225, 'NO orders');
dashDot(a, 345, 417.5, 782, 418.5, '#f00');
dashDot(a, 656, 534, 784, 420, '#0f0');
candles(a, A, 32, 8, 2);
note(a, 379, 328, 'Не достало 2 пипса (0,2п)');
note(a, 717, 401, 'ТЕЙК');
upright(a, 799, 406, '-1(-0$)', '#f00');
upright(a, 797, 416, '+999(146$)', '#0f0');
bigArrow(a, 347, 421, 758, 424);
bigArrow(a, 652, 526, 760, 434);
path(a, 'M330 417l3-4v8z M650 529l5-4v8z', { fill: '#0f0', stroke: '#fff' });
path(a, 'M792 418l5-4v8z', { fill: '#0f0', stroke: '#fff' });
path(a, 'M338 527h3v-3l5 5-5 5v-3h-3z M659 640h3v-3l4 5-4 5v-3h-3z', { fill: '#00f', stroke: '#fff' });
path(a, 'M823 80h10l-5 5z', { fill: '#70808f' });

const b = add(document.getElementById('plot-b'), 'g', { transform: 'translate(-973 -81)' });
[989, 1373, 1757].forEach(x => dayLine(b, x, 81, 843));
path(b, 'M973 142L990 144L1005 148L1037 153L1069 157L1117 163L1149 169L1181 175L1213 183L1245 189L1262 193L1277 195L1293 199L1325 209L1373 227L1405 239L1440 252L1472 264L1533 282L1550 290L1595 306L1640 320L1680 334L1740 351L1760 359L1800 374L1838 385', { stroke: '#fff', 'stroke-width': 2, 'shape-rendering': 'crispEdges' });
dashDot(b, 1355, 728, 1533, 603, '#0f0');
dashDot(b, 1697, 793, 1815, 713, '#0f0');
candles(b, B, 973, 16, 5);
rect(b, 1351, 711, 6, 5, '#fff');
rect(b, 1687, 783, 3, 5, '#fff');
[[1068, 208], [1116, 212], [1292, 456], [1404, 619], [1532, 577], [1628, 644], [1836, 660]].forEach(p => fractal(b, p[0], p[1], 1));
[[1036, 354], [1148, 406], [1372, 773], [1484, 724], [1612, 768], [1692, 844], [1756, 806]].forEach(p => fractal(b, p[0], p[1], -1));
signal(b, 1277, 596);
signal(b, 1389, 759);
signal(b, 1709, 848);
rect(b, 1370, 603, 7, 1, '#00f');
rect(b, 1754, 675, 7, 1, '#00f');
[559, 532, 495].forEach(y => upright(b, 1546, y, '+500(5$)', '#0f0'));
upright(b, 1835, 630, '+343(3$)', '#0f0');
note(b, 1391, 571, 'Тейк получен сразу');
bigArrow(b, 1363, 712, 1529, 600);
path(b, 'M1548 603l5-4v8z', { fill: '#0f0', stroke: '#fff' });
```
